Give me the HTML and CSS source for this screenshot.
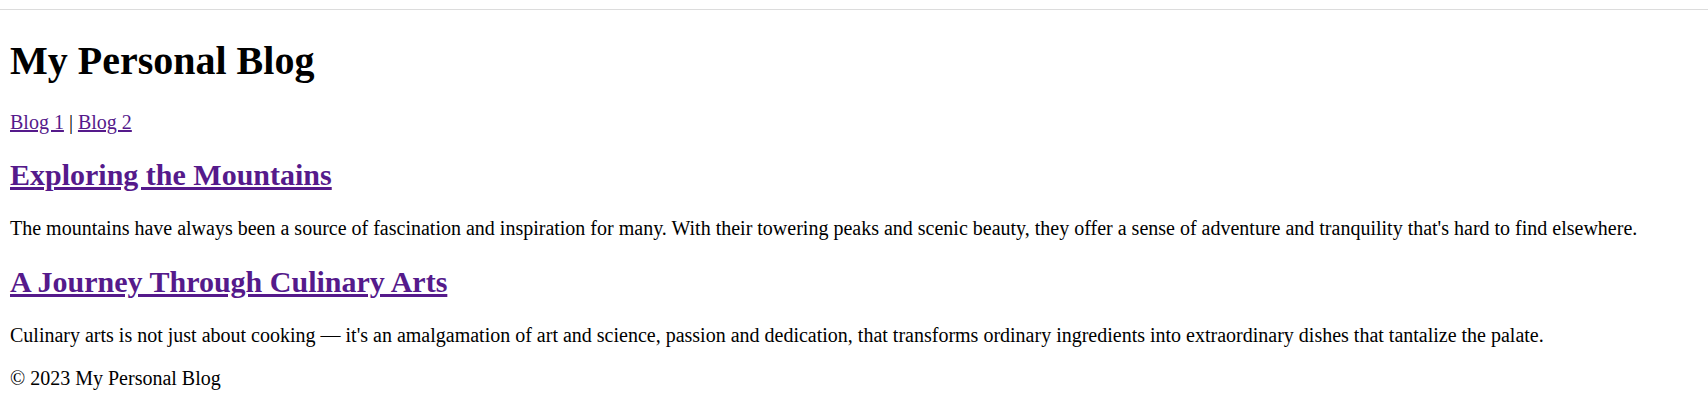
FILE: index.html
```html
<!DOCTYPE html>
<html lang="en">
<head>
<meta charset="utf-8">
<title>My Personal Blog</title>
<link rel="stylesheet" href="styles.css">
</head>
<body>
<div class="topline"></div>
<header class="site-header">
  <h1 class="site-title">My Personal Blog</h1>
  <nav class="site-nav"><a href="#blog1">Blog 1</a> | <a href="#blog2">Blog 2</a></nav>
</header>
<main>
  <article class="post">
    <h2 class="post-title"><a href="#blog1">Exploring the Mountains</a></h2>
    <p class="post-text">The mountains have always been a source of fascination and inspiration for many. With their towering peaks and scenic beauty, they offer a sense of adventure and tranquility that's hard to find elsewhere.</p>
  </article>
  <article class="post">
    <h2 class="post-title"><a href="#blog2">A Journey Through Culinary Arts</a></h2>
    <p class="post-text">Culinary arts is not just about cooking — it's an amalgamation of art and science, passion and dedication, that transforms ordinary ingredients into extraordinary dishes that tantalize the palate.</p>
  </article>
</main>
<footer class="site-footer"><p class="footer-text">© 2023 My Personal Blog</p></footer>
</body>
</html>
```
FILE: styles.css
```css
html {
  font-family: "Liberation Serif", "Times New Roman", serif;
  font-size: 20px;
}
body {
  margin: 0;
  padding: 0 10px 10px;
  color: #000;
  background: #fff;
}
.topline {
  margin: 9px -10px 0;
  border-top: 1px solid #dcdcdc;
}
a {
  color: #551a8b;
}
.site-title {
  font-size: 2em;
  margin: 0.67em 0;
}
.site-nav {
  margin: 0;
}
.post-title {
  font-size: 1.5em;
  margin: 0.83em 0;
}
.post-text, .footer-text {
  margin: 1em 0;
}
```
